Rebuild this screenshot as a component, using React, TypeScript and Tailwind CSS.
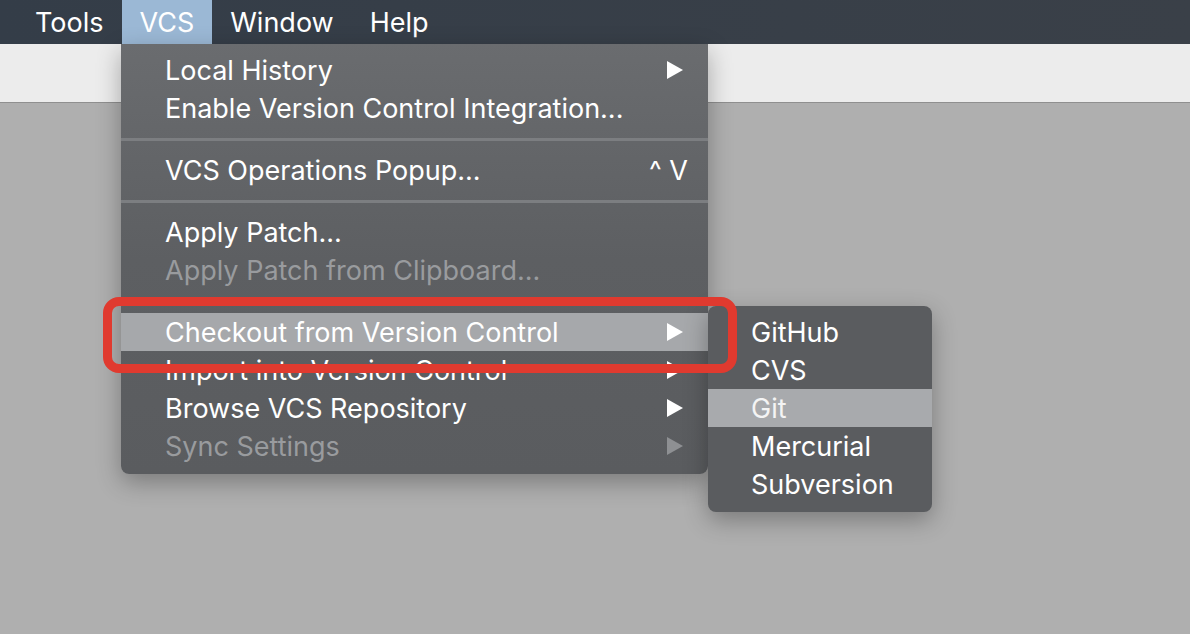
import React from 'react';

type Item =
  | { kind: 'item'; label: string; disabled?: boolean; submenu?: boolean; shortcut?: string; active?: boolean }
  | { kind: 'sep'; line: boolean };

const menuItems: Item[] = [
  { kind: 'item', label: 'Local History', submenu: true },
  { kind: 'item', label: 'Enable Version Control Integration...' },
  { kind: 'sep', line: true },
  { kind: 'item', label: 'VCS Operations Popup...', shortcut: '^ V' },
  { kind: 'sep', line: true },
  { kind: 'item', label: 'Apply Patch...' },
  { kind: 'item', label: 'Apply Patch from Clipboard...', disabled: true },
  { kind: 'sep', line: false },
  { kind: 'item', label: 'Checkout from Version Control', submenu: true, active: true },
  { kind: 'item', label: 'Import into Version Control', submenu: true },
  { kind: 'item', label: 'Browse VCS Repository', submenu: true },
  { kind: 'item', label: 'Sync Settings', submenu: true, disabled: true },
];

const subItems = ['GitHub', 'CVS', 'Git', 'Mercurial', 'Subversion'];

function Arrow({ dim }: { dim?: boolean }) {
  return (
    <svg width="18" height="20" viewBox="0 0 18 20" className="shrink-0">
      <polygon points="1,1 17,10 1,19" fill={dim ? '#8e9093' : '#ffffff'} />
    </svg>
  );
}

export default function App() {
  return (
    <div
      className="relative w-[1190px] h-[634px] overflow-hidden bg-[#afafaf] flex flex-col"
      style={{ fontFamily: 'Inter, "Noto Sans", sans-serif' }}
    >
      {/* menu bar */}
      <div className="h-[44px] bg-gradient-to-r from-[#343d48] to-[#3a4048] flex items-stretch pl-[17px] text-white text-[27px]">
        {['Tools', 'VCS', 'Window', 'Help'].map((m) => (
          <div
            key={m}
            className={`px-[18px] flex items-center leading-none ${m === 'VCS' ? 'bg-[#9bb8d5]' : ''}`}
          >
            {m}
          </div>
        ))}
      </div>

      {/* toolbar strip */}
      <div className="h-[59px] bg-[#ececec] border-b border-[#8f8f8f]" />
      <div className="flex-1" />

      {/* VCS menu */}
      <div className="absolute left-[121px] top-[44px] w-[587px] h-[430px] rounded-b-[8px] bg-gradient-to-b from-[#6a6c6f] via-[#5d5f62] to-[#5a5c5f] shadow-[0_8px_24px_rgba(0,0,0,0.3)] pt-[7px] text-[27px] text-white">
        {menuItems.map((it, i) =>
          it.kind === 'sep' ? (
            <div key={i} className="h-[24px] flex items-center">
              {it.line && <div className="h-[3px] w-full bg-[#7c7e81]" />}
            </div>
          ) : (
            <div
              key={i}
              className={`h-[38px] flex items-center justify-between pl-[44px] pr-[24px] ${
                it.active ? 'bg-[#a6a8ab]' : ''
              } ${it.disabled ? 'text-[#999b9e]' : 'text-white'}`}
            >
              <span className="leading-none whitespace-nowrap">{it.label}</span>
              {it.submenu && <Arrow dim={it.disabled} />}
              {it.shortcut && <span className="leading-none mr-[-4px] whitespace-pre">{it.shortcut}</span>}
            </div>
          )
        )}
      </div>

      {/* submenu */}
      <div className="absolute left-[708px] top-[306px] w-[224px] h-[206px] rounded-[8px] bg-[#5a5c5f] shadow-[0_8px_24px_rgba(0,0,0,0.3)] pt-[7px] text-[27px]">
        {subItems.map((s) => (
          <div
            key={s}
            className={`h-[38px] flex items-center pl-[43px] ${s === 'Git' ? 'bg-[#a8aaad] text-[#f4f4f4]' : 'text-white'}`}
          >
            <span className="leading-none">{s}</span>
          </div>
        ))}
      </div>

      {/* red annotation */}
      <div className="absolute left-[103px] top-[297px] w-[634px] h-[76px] rounded-[16px] border-[9px] border-[#e03a2f]" />
    </div>
  );
}
